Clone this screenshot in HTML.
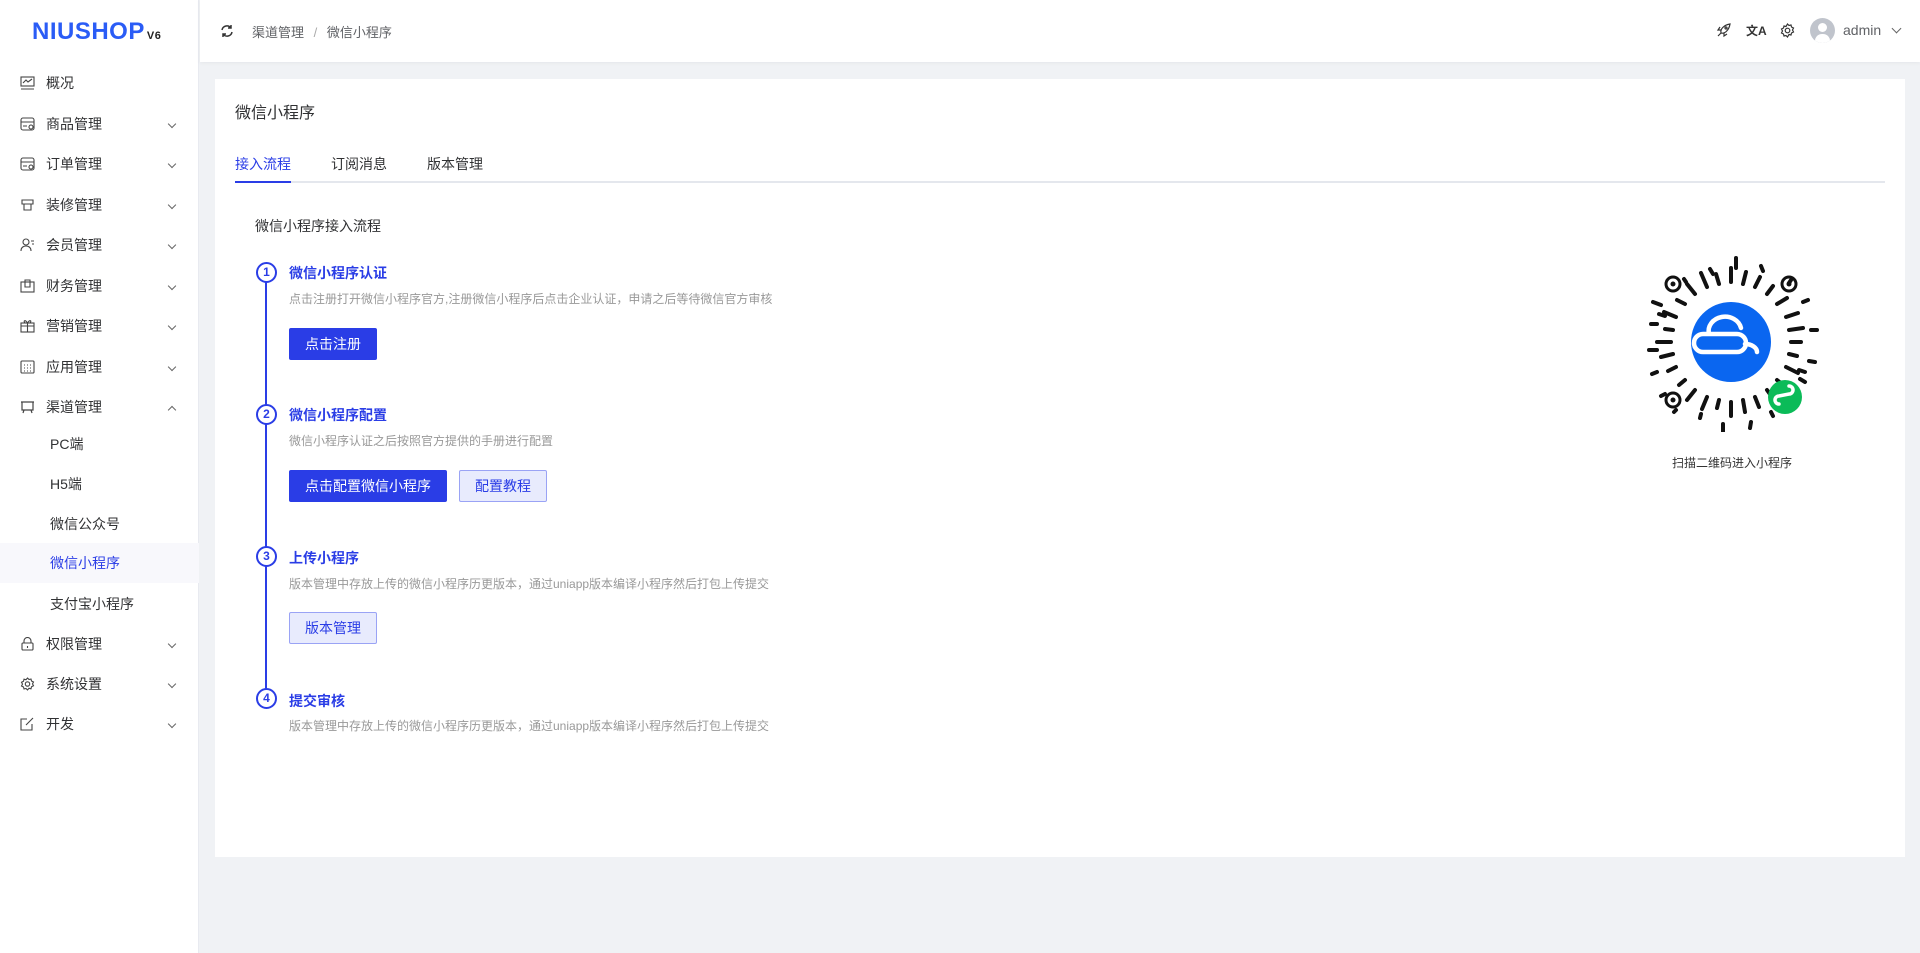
<!DOCTYPE html>
<html><head><meta charset="utf-8"><style>
*{margin:0;padding:0;box-sizing:border-box}
body{width:1920px;height:953px;background:#f0f2f5;font-family:"Liberation Sans","Noto Sans CJK SC",sans-serif;position:relative;overflow:hidden;color:#303133}
.abs{position:absolute}
.side{left:0;top:0;width:199px;height:953px;background:#fff;border-right:1px solid #e8eaf0}
.logo{left:32px;top:18px;font-weight:bold;font-size:24px;color:#2a5cf6;letter-spacing:0.5px;font-family:"Liberation Sans",sans-serif}
.logo small{font-size:11px;color:#222;margin-left:2px}
.mi{left:0;width:199px;height:40px;font-size:14px;line-height:40px;color:#303133}
.mi .ic{position:absolute;left:20px;top:13px;width:15px;height:14px}
.mi .tx{position:absolute;left:46px}
.mi .ch{position:absolute;left:169px;top:17px;width:6px;height:6px;border-right:1px solid #666;border-bottom:1px solid #666;transform:rotate(45deg)}
.mi .ch.up{transform:rotate(-135deg);top:20px}
.sub .tx{left:50px}
.hdr{left:200px;top:0;width:1720px;height:62px;background:#fff;box-shadow:0 1px 4px rgba(0,0,0,.05)}
.card{left:215px;top:79px;width:1690px;height:778px;background:#fff}
.btn{position:absolute;height:32px;line-height:32px;font-size:14px;text-align:center;border-radius:2px}
.bp{background:#2a3de6;color:#fff}
.bs{background:#e8ebfd;color:#2a3de6;border:1px solid #9aa3f5;line-height:30px}
.st{position:absolute;left:289px;font-size:14px;font-weight:bold;color:#2a3de6}
.sd{position:absolute;left:289px;font-size:12px;color:#999}
.cir{position:absolute;left:256px;width:21px;height:21px;border:2px solid #2a3de6;border-radius:50%;background:#fff;font-size:12px;font-weight:bold;color:#2a3de6;text-align:center;line-height:17px}
</style></head><body>
<div class="abs side">
<div class="abs logo">NIUSHOP<small>V6</small></div>
<div class="abs mi" style="top:63px"><svg class="ic" viewBox="0 0 15 14" fill="none" stroke="#444" stroke-width="1.1"><rect x="1" y="1" width="13" height="9"/><path d="M3 7l3-3 2 2 4-3M1 13h13"/></svg><span class="tx">概况</span></div>
<div class="abs mi" style="top:104px"><svg class="ic" viewBox="0 0 15 14" fill="none" stroke="#444" stroke-width="1.1"><rect x="1" y="1" width="13" height="12" rx="2"/><path d="M1 5h13M3 9h4"/><circle cx="11" cy="10" r="2"/></svg><span class="tx">商品管理</span><i class="ch"></i></div>
<div class="abs mi" style="top:144px"><svg class="ic" viewBox="0 0 15 14" fill="none" stroke="#444" stroke-width="1.1"><rect x="1" y="1" width="13" height="12" rx="2"/><path d="M1 5h13M3 9h4"/><circle cx="11" cy="10" r="2"/></svg><span class="tx">订单管理</span><i class="ch"></i></div>
<div class="abs mi" style="top:185px"><svg class="ic" viewBox="0 0 15 14" fill="none" stroke="#444" stroke-width="1.1"><path d="M2 2h11v4h-2v6H4V6H2zM2 6h11"/></svg><span class="tx">装修管理</span><i class="ch"></i></div>
<div class="abs mi" style="top:225px"><svg class="ic" viewBox="0 0 15 14" fill="none" stroke="#444" stroke-width="1.1"><circle cx="6" cy="4" r="3"/><path d="M1 13c0-4 3-5 5-5s5 1 5 5M11 3h3M12 6h2"/></svg><span class="tx">会员管理</span><i class="ch"></i></div>
<div class="abs mi" style="top:266px"><svg class="ic" viewBox="0 0 15 14" fill="none" stroke="#444" stroke-width="1.1"><rect x="1" y="3" width="13" height="10"/><path d="M5 3V1h5v2M5 3v5h5V3"/></svg><span class="tx">财务管理</span><i class="ch"></i></div>
<div class="abs mi" style="top:306px"><svg class="ic" viewBox="0 0 15 14" fill="none" stroke="#444" stroke-width="1.1"><rect x="1" y="4" width="13" height="9"/><path d="M1 7h13M7.5 4v9M7.5 4C5 0 3 2 5 4M7.5 4C10 0 12 2 10 4"/></svg><span class="tx">营销管理</span><i class="ch"></i></div>
<div class="abs mi" style="top:347px"><svg class="ic" viewBox="0 0 15 14" fill="none" stroke="#444" stroke-width="1.1"><rect x="1" y="1" width="13" height="12" rx="1"/><path d="M4 5h1M7 5h1M10 5h1M4 8h1M7 8h1M10 8h1M4 11h1M7 11h1M10 11h1"/></svg><span class="tx">应用管理</span><i class="ch"></i></div>
<div class="abs mi" style="top:387px"><svg class="ic" viewBox="0 0 15 14" fill="none" stroke="#444" stroke-width="1.2"><path d="M1 2h13M2 2v8h11V2M4 10l-1 3M11 10l1 3"/></svg><span class="tx">渠道管理</span><i class="ch up"></i></div>
<div class="abs mi sub" style="top:424px"><span class="tx">PC端</span></div>
<div class="abs mi sub" style="top:464px"><span class="tx">H5端</span></div>
<div class="abs mi sub" style="top:504px"><span class="tx">微信公众号</span></div>
<div class="abs mi sub" style="top:543px;background:#f8f8fc"><span class="tx" style="color:#2a3de6">微信小程序</span></div>
<div class="abs mi sub" style="top:584px"><span class="tx">支付宝小程序</span></div>
<div class="abs mi" style="top:624px"><svg class="ic" viewBox="0 0 15 14" fill="none" stroke="#444" stroke-width="1.1"><rect x="2" y="6" width="11" height="7" rx="1"/><path d="M4 6V4a3.5 3.5 0 017 0v2M7.5 9v2"/></svg><span class="tx">权限管理</span><i class="ch"></i></div>
<div class="abs mi" style="top:664px"><svg class="ic" viewBox="0 0 15 14" fill="none" stroke="#444" stroke-width="1.1"><circle cx="7.5" cy="7" r="2.2"/><path d="M7.5 1l1.5 1.5 2-.5.5 2 2 1-1 1.9 1 1.9-2 1-.5 2-2-.5L7.5 13 6 11.5l-2 .5-.5-2-2-1 1-1.9-1-1.9 2-1 .5-2 2 .5z"/></svg><span class="tx">系统设置</span><i class="ch"></i></div>
<div class="abs mi" style="top:704px"><svg class="ic" viewBox="0 0 15 14" fill="none" stroke="#444" stroke-width="1.1"><path d="M7 2H1v11h11V7M6 8l7-7"/></svg><span class="tx">开发</span><i class="ch"></i></div>
</div>

<div class="abs hdr">
<svg class="abs" style="left:20px;top:24px" width="14" height="14" viewBox="0 0 14 14" fill="none" stroke="#333" stroke-width="1.5"><path d="M2 6a5 5 0 019-2M12 8a5 5 0 01-9 2M11 1v3H8M3 13v-3h3"/></svg>
<div class="abs" style="left:52px;top:22px;font-size:13px;color:#606266">渠道管理 <span style="color:#aaa;margin:0 6px">/</span> 微信小程序</div>
<svg class="abs" style="left:1516px;top:23px" width="15" height="15" viewBox="0 0 15 15" fill="none" stroke="#333" stroke-width="1.2"><path d="M5 10C4 6 8 2 14 1c-1 6-5 10-9 9zM5 10l-3 3M5 7L2 7l2-3M8 10v3l3-2"/><circle cx="10" cy="5" r="1"/></svg>
<div class="abs" style="left:1546px;top:22px;font-size:12px;color:#333;font-weight:bold">文A</div>
<svg class="abs" style="left:1580px;top:23px" width="15" height="15" viewBox="0 0 15 15" fill="none" stroke="#333" stroke-width="1.2"><circle cx="7.5" cy="7.5" r="2.3"/><path d="M7.5 1l1.5 1.5 2-.5.5 2 2 1-1 2 1 2-2 1-.5 2-2-.5L7.5 14 6 12.5l-2 .5-.5-2-2-1 1-2-1-2 2-1 .5-2 2 .5z"/></svg>
<div class="abs" style="left:1610px;top:18px;width:25px;height:25px;border-radius:50%;background:#c0c4cc;overflow:hidden"><div class="abs" style="left:8px;top:5px;width:9px;height:9px;border-radius:50%;background:#fff"></div><div class="abs" style="left:5px;top:16px;width:15px;height:10px;border-radius:7px 7px 0 0;background:#fff"></div></div>
<div class="abs" style="left:1643px;top:22px;font-size:14px;color:#606266">admin</div>
<i class="abs" style="left:1693px;top:25px;width:7px;height:7px;border-right:1px solid #666;border-bottom:1px solid #666;transform:rotate(45deg)"></i>
</div>

<div class="abs card"></div>
<div class="abs" style="left:235px;top:99px;font-size:16px">微信小程序</div>
<div class="abs" style="left:235px;top:154px;font-size:14px;color:#2a3de6">接入流程</div>
<div class="abs" style="left:331px;top:154px;font-size:14px">订阅消息</div>
<div class="abs" style="left:427px;top:154px;font-size:14px">版本管理</div>
<div class="abs" style="left:235px;top:181px;width:1650px;height:2px;background:#e4e7ed"></div>
<div class="abs" style="left:235px;top:181px;width:56px;height:2px;background:#2a3de6"></div>
<div class="abs" style="left:255px;top:216px;font-size:14px">微信小程序接入流程</div>

<div class="abs" style="left:265px;top:273px;width:2px;height:428px;background:#2a3de6"></div>
<div class="cir" style="top:262px">1</div>
<div class="st" style="top:263px">微信小程序认证</div>
<div class="sd" style="top:290px">点击注册打开微信小程序官方,注册微信小程序后点击企业认证，申请之后等待微信官方审核</div>
<div class="btn bp" style="left:289px;top:328px;width:88px">点击注册</div>
<div class="cir" style="top:404px">2</div>
<div class="st" style="top:405px">微信小程序配置</div>
<div class="sd" style="top:432px">微信小程序认证之后按照官方提供的手册进行配置</div>
<div class="btn bp" style="left:289px;top:470px;width:158px">点击配置微信小程序</div>
<div class="btn bs" style="left:459px;top:470px;width:88px">配置教程</div>
<div class="cir" style="top:546px">3</div>
<div class="st" style="top:548px">上传小程序</div>
<div class="sd" style="top:575px">版本管理中存放上传的微信小程序历更版本，通过uniapp版本编译小程序然后打包上传提交</div>
<div class="btn bs" style="left:289px;top:612px;width:88px">版本管理</div>
<div class="cir" style="top:688px">4</div>
<div class="st" style="top:691px">提交审核</div>
<div class="sd" style="top:717px">版本管理中存放上传的微信小程序历更版本，通过uniapp版本编译小程序然后打包上传提交</div>

<svg class="abs" style="left:1641px;top:252px" width="180" height="180" viewBox="-90 -90 180 180">
<g stroke="#111" stroke-width="4" stroke-linecap="round" fill="none">
<path d="M0-60v-14M12-58l3-12M24-55l5-10M-12-58l-3-10M-24-55l-6-14M36-48l6-8M-36-48l-8-10M46-38l10-6M-46-38l-8-4M55-25l12-4M-55-25l-12-5M58-12l14-2M-58-12l-8-1M60 0h10M-60 0h-14M58 12l8 2M-58 12l-12 3M55 25l12 6M-55 25l-8 4M46 38l10 8M-46 38l-6 5M36 48l5 7M-36 48l-8 10M24 55l4 10M-24 55l-5 12M12 58l2 12M-12 58l-2 8M0 60v14"/>
<path d="M5-84v10M-18-68l-3-5M30-76l2 5M-45-60l-2-3M60-62l-2 3M72-40l5-2M-78-40l8 3M-80-18h6M80-12h6M-82 8h8M84 20l-6-1M-74 30l-5 2M74 40l-5-3M-66 52l-4 2M58 66l-3-3M-30 72l-1 4M20 80l-1 6M-8 82v8M40 70l2 4M-55 68l-2 2M-66-26l-6-2M68 28l6 2"/>
</g>
<g stroke="#111" stroke-width="3" fill="none"><circle cx="-58" cy="-58" r="7"/><circle cx="58" cy="-58" r="7"/><circle cx="-58" cy="58" r="7"/></g>
<g fill="#111"><circle cx="-58" cy="-58" r="2.5"/><circle cx="58" cy="-58" r="2.5"/><circle cx="-58" cy="58" r="2.5"/></g>
<circle r="40" fill="#0a66f0"/>
<path d="M-28 10a9 9 0 010-18h34a9 9 0 010 18zM-22-8a16 14 0 0132-6M14 2a12 8 0 0112 8" stroke="#fff" stroke-width="4.5" fill="none" stroke-linecap="round"/>
<circle cx="54" cy="55" r="17" fill="#0bbb58"/>
<path d="M48 62a4 4 0 010-8l10-2a4 4 0 000-8" stroke="#fff" stroke-width="3.5" fill="none" stroke-linecap="round"/>
</svg>
<div class="abs" style="left:1672px;top:454px;font-size:12px;color:#333">扫描二维码进入小程序</div>
</body></html>
